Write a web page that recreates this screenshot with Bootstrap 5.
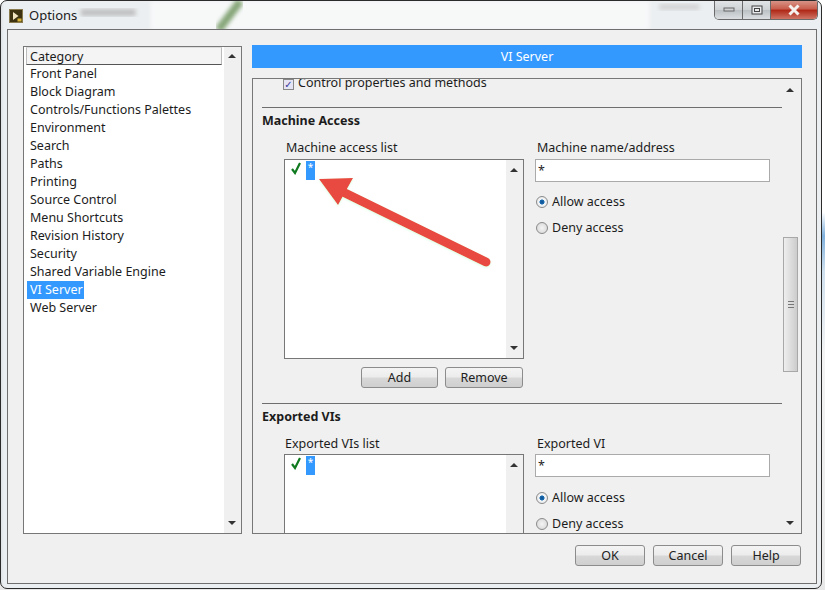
<!DOCTYPE html>
<html lang="en">
<head>
<meta charset="utf-8">
<title>Options</title>
<link href="https://cdn.jsdelivr.net/npm/bootstrap@5.3.0/dist/css/bootstrap.min.css" rel="stylesheet">
<style>
html,body{width:825px;height:590px;overflow:hidden;margin:0}
body{background:linear-gradient(#fff 0,#fff 36%,#7fb0dc 40%,#cfe0ee 46%,#f4f4f4 60%,#e8e8e8 100%);font-family:"Noto Sans","DejaVu Sans",sans-serif;font-size:12.5px;color:#1c1c1c;line-height:18px;position:relative}
.dlg-window{width:822px;height:589px;border:1px solid #2b2b2b;border-radius:7px;padding:0 4px 5px 6px;position:relative;overflow:hidden;
 background:linear-gradient(90deg,#dfe3e6 0,#eceff1 3px,#eceff1 100%)}
.dlg-glass{position:absolute;left:0;top:0;width:100%;height:29px;pointer-events:none}
.dlg-title{height:28px;position:relative;font-size:13px}
.dlg-title-text{margin-left:22px}
.dlg-icon{position:absolute;left:2px;top:8px}
.win-ctl{height:20px;top:-1px;right:-1px;position:absolute;display:flex;border:1px solid #6a6a6a;border-top:0;border-radius:0 0 5px 5px;overflow:hidden}
.win-btn{height:19px;width:28px;border-right:1px solid #6a6a6a;background:linear-gradient(#e4e6e8,#cfd3d6 50%,#bcc1c5 55%,#dcdfe1);display:flex;align-items:center;justify-content:center}
.win-close{width:46px;border-right:0;background:linear-gradient(#d99a8e,#c9604f 45%,#b02a1a 55%,#cf7565)}
.dlg-client{height:555px;border:1px solid #6f6f6f;background:#f0f0f0;padding:16px 15px 0 15px;position:relative}
.dlg-main{height:488px;gap:10px}
.cat-box{width:219px;height:488px;border:1px solid #777;background:#fff;padding-left:2px;position:relative;flex:none}
.cat-head{height:18px;width:196px;border:1px solid #bbb;border-bottom:1px solid #555;border-top-color:#ddd;padding-left:3px;background:#f4f4f4;line-height:17px}
.cat-row{height:18px;padding-left:4px}
.cat-sel{display:inline-block;background:#3399ff;color:#fff;padding:0 1px 0 3px;margin-left:-3px;height:18px}
.scroll-v{position:absolute;top:0;right:0;bottom:0;width:17px;background:#f0f0f0;display:flex;flex-direction:column;justify-content:space-between;align-items:center;padding:7px 1px 8px 0}
.tri-up{width:0;height:0;border-left:4px solid transparent;border-right:4px solid transparent;border-bottom:4px solid #333}
.tri-dn{width:0;height:0;border-left:4px solid transparent;border-right:4px solid transparent;border-top:4px solid #333}
.dlg-right{width:550px;flex:none}
.vi-head{height:23px;margin-top:-1px;background:#3399ff;color:#fff;text-align:center;line-height:23px}
.vi-panel{height:456px;margin-top:10px;border:1px solid #777;background:#f0f0f0;position:relative;overflow:hidden}
.vi-scroll-inner{margin-top:-7px;padding:0 19px 0 9px}
.prop-row{height:18px;padding-left:21px;margin-bottom:15px;margin-top:2px}
.fake-check{display:inline-block;width:11px;height:11px;border:1px solid #888;background:#e4e4f4;color:#34349a;font-size:10px;line-height:9px;text-align:center;margin-right:4px;vertical-align:-1px}
.sect-rule{border-top:1px solid #6e6e6e;margin:0;opacity:1}
.sect-title{font-weight:700;margin-top:4px;height:18px;line-height:18px;font-size:12.5px}
.sect-cols{gap:11px;padding-left:22px}
.col-list{width:240px;flex:none}
.col-form{width:235px;flex:none}
.lbl-row{height:18px;margin-top:9px;margin-bottom:2px;padding-left:2px}
.acc-list{height:200px;border:1px solid #777;background:#fff;position:relative}
.acc-cut{height:110px}
.acc-item{display:flex;align-items:flex-start;padding:1px 0 0 5px;gap:4px}
.acc-star{display:inline-block;width:9px;height:19px;background:#3399ff;color:#fff;font-size:10px;line-height:13px;text-align:center}
.dlg-input{height:23px;width:235px;border:1px solid #aaa;border-radius:0;padding:0 2px;font-size:12.5px;line-height:20px;color:#222;background:#fff;box-shadow:none;min-height:0}
.radio-row{height:18px;display:flex;align-items:center;gap:4px;margin-top:8px;margin-bottom:8px;padding-left:1px}
.radio-first{margin-top:11px}
.dot{width:12px;height:12px;border-radius:50%;border:1px solid #8a8a8a;background:radial-gradient(circle,#f4f4f4,#d4d4d4);flex:none}
.dot-on{background:radial-gradient(circle,#0a4f8f 0,#1f6fb4 34%,#f4f6f8 38%,#e4e4e4)}
.act-row{gap:7px;justify-content:flex-end;margin-top:8px;margin-bottom:15px;padding-right:1px}
.dlg-btn{height:21px;padding:0;border:1px solid #8c8c8c;border-radius:3px;background:linear-gradient(#f4f4f4 0,#ececec 48%,#d8d8d8 52%,#cfcfcf 100%);color:#222;font-size:12.5px;line-height:18px;--bs-btn-hover-bg:#ddd}
.btn-add{width:77px}
.btn-rem{width:78px}
.foot-btn{width:70px}
.dlg-foot{gap:8px;justify-content:flex-end;margin-top:11px;padding-right:0}
.scroll-wide{top:0;right:0;width:18px;padding:0}
.scroll-thumb{position:absolute;left:0;top:158px;width:15px;height:135px;border:1px solid #a8a8a8;background:linear-gradient(90deg,#eee,#ddd 50%,#ccc);display:flex;align-items:center;justify-content:center}
.grip{width:6px;height:7px;border-top:1px solid #777;border-bottom:1px solid #777;position:relative}
.grip:after{content:"";position:absolute;left:0;right:0;top:2px;border-top:1px solid #777}
.tri-abs-up{position:absolute;top:9px;left:3px}
.tri-abs-dn{position:absolute;bottom:8px;left:3px}
.sec-two .lbl-row{margin-bottom:1px}
.sec-two .col-list .lbl-row{padding-left:1px}
.sec-two .radio-first{margin-top:12px}
.scroll-list{padding-top:8px}
.arrow-over{position:absolute;left:0;top:0;width:825px;height:590px;pointer-events:none}
</style>
</head>
<body>
<div class="dlg-window">
  <svg class="dlg-glass" viewBox="0 0 822 29" aria-hidden="true">
    <defs><filter id="bl"><feGaussianBlur stdDeviation="2"/></filter></defs>
    <rect x="80" y="8" width="55" height="7" fill="#9a9a9a" opacity=".55" filter="url(#bl)"/>
    <rect x="150" y="0" width="500" height="29" fill="#fff" opacity=".6" filter="url(#bl)"/>
    <path d="M240 0L218 29" stroke="#86a678" stroke-width="8" filter="url(#bl)"/>
    <rect x="660" y="3" width="40" height="6" fill="#aaa" opacity=".4" filter="url(#bl)"/>
  </svg>
  <div class="dlg-title d-flex align-items-center">
    <svg width="14" height="14" viewBox="0 0 14 14" class="dlg-icon" aria-hidden="true">
      <rect x=".5" y=".5" width="13" height="13" fill="#3d3212" stroke="#8a7a50"/>
      <path d="M4 3L9.5 7L4 11Z" fill="#f2e7c2"/>
      <rect x="8.5" y="9.5" width="4" height="3" fill="#d9b43a"/>
    </svg>
    <span class="dlg-title-text">Options</span>
    <div class="win-ctl">
      <div class="win-btn"><svg width="12" height="6" aria-hidden="true"><rect x="1" y="1" width="10" height="3" fill="#cfd3d6" stroke="#666"/></svg></div>
      <div class="win-btn"><svg width="12" height="10" aria-hidden="true"><rect x="1" y="1" width="10" height="8" fill="#e8eaec" stroke="#444"/><rect x="3.5" y="3.5" width="5" height="3" fill="none" stroke="#444"/></svg></div>
      <div class="win-btn win-close"><svg width="14" height="12" aria-hidden="true"><path d="M2.5 1.5L11.5 10.5M11.5 1.5L2.5 10.5" stroke="#f4f0ee" stroke-width="3"/></svg></div>
    </div>
  </div>
  <div class="dlg-client">
    <div class="dlg-main d-flex">
      <div class="cat-box">
        <div class="cat-head">Category</div>
        <div class="cat-row">Front Panel</div>
        <div class="cat-row">Block Diagram</div>
        <div class="cat-row">Controls/Functions Palettes</div>
        <div class="cat-row">Environment</div>
        <div class="cat-row">Search</div>
        <div class="cat-row">Paths</div>
        <div class="cat-row">Printing</div>
        <div class="cat-row">Source Control</div>
        <div class="cat-row">Menu Shortcuts</div>
        <div class="cat-row">Revision History</div>
        <div class="cat-row">Security</div>
        <div class="cat-row">Shared Variable Engine</div>
        <div class="cat-row"><span class="cat-sel">VI Server</span></div>
        <div class="cat-row">Web Server</div>
        <div class="scroll-v"><span class="tri-up"></span><span class="tri-dn"></span></div>
      </div>
      <div class="dlg-right">
        <div class="vi-head">VI Server</div>
        <div class="vi-panel">
          <div class="vi-scroll-inner">
            <div class="prop-row"><span class="fake-check">✓</span>Control properties and methods</div>
            <hr class="sect-rule">
            <div class="sect-title">Machine Access</div>
            <div class="d-flex sect-cols">
              <div class="col-list">
                <div class="lbl-row">Machine access list</div>
                <div class="acc-list">
                  <div class="acc-item">
                    <svg width="12" height="14" viewBox="0 0 12 14" aria-hidden="true"><path d="M2 8L5 12L10 2" fill="none" stroke="#0f7a1f" stroke-width="2.2"/></svg>
                    <span class="acc-star">*</span>
                  </div>
                  <div class="scroll-v scroll-list"><span class="tri-up"></span><span class="tri-dn"></span></div>
                </div>
                <div class="d-flex act-row">
                  <button type="button" class="btn dlg-btn btn-add">Add</button>
                  <button type="button" class="btn dlg-btn btn-rem">Remove</button>
                </div>
              </div>
              <div class="col-form">
                <div class="lbl-row">Machine name/address</div>
                <input class="form-control dlg-input" value="*" aria-label="Machine name/address">
                <div class="radio-row radio-first"><span class="dot dot-on"></span>Allow access</div>
                <div class="radio-row"><span class="dot"></span>Deny access</div>
              </div>
            </div>
            <hr class="sect-rule">
            <div class="sect-title">Exported VIs</div>
            <div class="d-flex sect-cols sec-two">
              <div class="col-list">
                <div class="lbl-row">Exported VIs list</div>
                <div class="acc-list acc-cut">
                  <div class="acc-item">
                    <svg width="12" height="14" viewBox="0 0 12 14" aria-hidden="true"><path d="M2 8L5 12L10 2" fill="none" stroke="#0f7a1f" stroke-width="2.2"/></svg>
                    <span class="acc-star">*</span>
                  </div>
                  <div class="scroll-v scroll-list justify-content-start"><span class="tri-up"></span></div>
                </div>
              </div>
              <div class="col-form">
                <div class="lbl-row">Exported VI</div>
                <input class="form-control dlg-input" value="*" aria-label="Exported VI">
                <div class="radio-row radio-first"><span class="dot dot-on"></span>Allow access</div>
                <div class="radio-row"><span class="dot"></span>Deny access</div>
              </div>
            </div>
          </div>
          <div class="scroll-v scroll-wide">
            <span class="tri-up tri-abs-up"></span>
            <div class="scroll-thumb"><span class="grip"></span></div>
            <span class="tri-dn tri-abs-dn"></span>
          </div>
        </div>
      </div>
    </div>
    <div class="d-flex dlg-foot">
      <button type="button" class="btn dlg-btn foot-btn">OK</button>
      <button type="button" class="btn dlg-btn foot-btn">Cancel</button>
      <button type="button" class="btn dlg-btn foot-btn">Help</button>
    </div>
  </div>
</div>
<svg class="arrow-over" viewBox="0 0 825 590" aria-hidden="true">
  <defs><filter id="sh" x="-10%" y="-10%" width="120%" height="120%"><feDropShadow dx="0" dy="1" stdDeviation="1" flood-color="#8fa" flood-opacity=".35"/></filter></defs>
  <g filter="url(#sh)">
    <path d="M345 193L486 262" stroke="#e8493f" stroke-width="9" stroke-linecap="round"/>
    <path d="M319 179L353 178L338 205Z" fill="#e8493f"/>
  </g>
</svg>
</body>
</html>
